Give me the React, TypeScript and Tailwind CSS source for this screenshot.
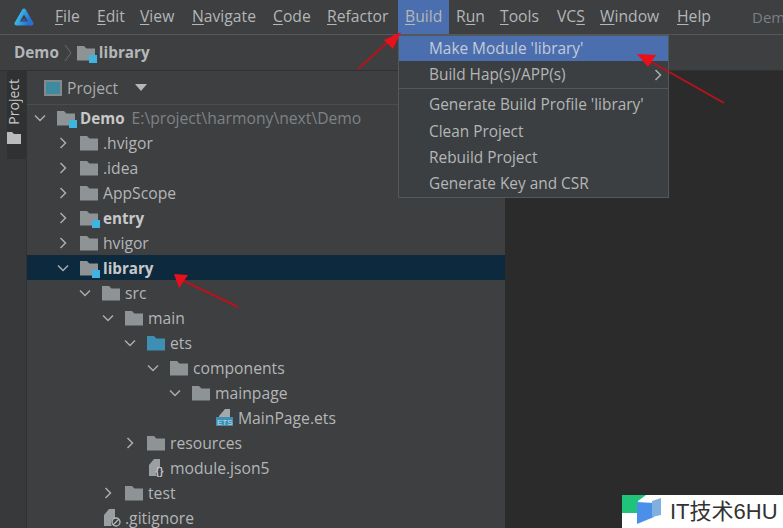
import React from "react";

const font = { fontFamily: '"Open Sans","Noto Sans",sans-serif' };

function Folder({ color = "#8e9396", badge = false }: { color?: string; badge?: boolean }) {
  return (
    <span className="relative inline-block w-[18px] h-[16px] shrink-0">
      <svg width="18" height="16" viewBox="0 0 18 16" className="block">
        <path d="M0 1h7l2.4 2.6H18V15.5H0z" fill={color} />
      </svg>
      {badge && <span className="absolute right-[-2px] bottom-[-2px] w-[8px] h-[8px] bg-[#3fb4e0]" />}
    </span>
  );
}

function Chevron({ open }: { open: boolean }) {
  return (
    <svg width="12" height="12" viewBox="0 0 12 12" className="shrink-0" fill="none" stroke="#a9adb0" strokeWidth="1.5">
      {open ? <path d="M1 3.5l5 5 5-5" /> : <path d="M3.5 1l5 5-5 5" />}
    </svg>
  );
}

function EtsIcon() {
  return (
    <svg width="18" height="19" viewBox="0 0 18 19" className="shrink-0">
      <path d="M3 8L9 1h5v8H3z" fill="#a3a8aa" />
      <rect x="0" y="9" width="17" height="9" fill="#3d8fb3" />
      <text x="1" y="17" fontSize="8" fill="#c9dde6" fontFamily="Liberation Sans">ETS</text>
    </svg>
  );
}

function FileIcon({ kind }: { kind: "json" | "ignore" }) {
  return (
    <svg width="18" height="19" viewBox="0 0 18 19" className="shrink-0">
      <path d="M1 7l5-6h6v9a5 5 0 0 0-3 8H1z" fill="#9a9fa2" />
      {kind === "json" ? (
        <text x="7.5" y="17" fontSize="10" fontWeight="700" fill="#c4c7c9" fontFamily="Liberation Sans">{"{}"}</text>
      ) : (
        <g fill="none" stroke="#b5b8ba" strokeWidth="1.3">
          <circle cx="13" cy="14" r="4" />
          <path d="M10 17l6-6" />
        </g>
      )}
    </svg>
  );
}

type Row = {
  label: string;
  left: number;
  open?: boolean;
  icon: "folder" | "module" | "src" | "ets" | "json" | "ignore";
  bold?: boolean;
  sel?: boolean;
  hint?: string;
};

const rows: Row[] = [
  { label: "Demo", left: 33, open: true, icon: "module", bold: true, hint: "E:\\project\\harmony\\next\\Demo" },
  { label: ".hvigor", left: 56, open: false, icon: "folder" },
  { label: ".idea", left: 56, open: false, icon: "folder" },
  { label: "AppScope", left: 56, open: false, icon: "folder" },
  { label: "entry", left: 56, open: false, icon: "module", bold: true },
  { label: "hvigor", left: 56, open: false, icon: "folder" },
  { label: "library", left: 56, open: true, icon: "module", bold: true, sel: true },
  { label: "src", left: 78, open: true, icon: "folder" },
  { label: "main", left: 101, open: true, icon: "folder" },
  { label: "ets", left: 123, open: true, icon: "src" },
  { label: "components", left: 146, open: true, icon: "folder" },
  { label: "mainpage", left: 168, open: true, icon: "folder" },
  { label: "MainPage.ets", left: 192, icon: "ets" },
  { label: "resources", left: 123, open: false, icon: "folder" },
  { label: "module.json5", left: 124, icon: "json" },
  { label: "test", left: 101, open: false, icon: "folder" },
  { label: ".gitignore", left: 79, icon: "ignore" },
];

function TreeRow({ r }: { r: Row }) {
  const icon =
    r.icon === "folder" ? <Folder /> :
    r.icon === "module" ? <Folder badge /> :
    r.icon === "src" ? <Folder color="#3d8fb3" /> :
    r.icon === "ets" ? <EtsIcon /> : <FileIcon kind={r.icon} />;
  const isFile = r.icon === "ets" || r.icon === "json" || r.icon === "ignore";
  return (
    <div className={`flex items-center h-[25px] shrink-0 ${r.sel ? "bg-[#0d293e]" : ""}`} style={{ paddingLeft: r.left - 26 }}>
      <span className="w-[23px] shrink-0 flex">{r.open !== undefined && <Chevron open={r.open} />}</span>
      {icon}
      <span className={`whitespace-nowrap pt-[2px] ${isFile ? "ml-[4px]" : "ml-[5px]"} ${r.bold ? "font-bold text-[15.2px] text-[#c8c8c8]" : ""}`}>{r.label}</span>
      {r.hint && <span className="ml-[7px] pt-[2px] text-[#7f8284] whitespace-nowrap">{r.hint}</span>}
    </div>
  );
}

function M({ a, u, b, w, active }: { a?: string; u: string; b: string; w: number; active?: boolean }) {
  return (
    <span className={`h-full flex items-center pl-[7px] shrink-0 ${active ? "bg-[#4b6eaf]" : ""}`} style={{ width: w }}>
      <span>{a}<span className="underline underline-offset-2">{u}</span>{b}</span>
    </span>
  );
}

export default function App() {
  return (
    <div className="relative w-[783px] h-[528px] overflow-hidden bg-[#3d3f41] text-[#b4b6b7] text-[15.7px] flex flex-col" style={font}>
      {/* menu bar */}
      <div className="flex items-stretch h-[35px] shrink-0 border-b border-[#55585a]">
        <svg width="22" height="22" viewBox="0 0 22 22" className="ml-[13px] mr-[13px] mt-[6px] shrink-0">
          <defs>
            <linearGradient id="lg" x1="0" y1="0" x2="1" y2="0.4">
              <stop offset="0" stopColor="#3fd0e8" />
              <stop offset="1" stopColor="#2a6fd6" />
            </linearGradient>
          </defs>
          <path d="M11 4.5L3.5 17.5h15z" fill="none" stroke="url(#lg)" strokeWidth="4" strokeLinejoin="round" />
          <path d="M11 12l-3 4h6z" fill="#2f5fa8" />
        </svg>
        <div className="flex items-center h-full">
          <M u="F" b="ile" w={42} />
          <M u="E" b="dit" w={43} />
          <M u="V" b="iew" w={52} />
          <M u="N" b="avigate" w={81} />
          <M u="C" b="ode" w={54} />
          <M u="R" b="efactor" w={78} />
          <M u="B" b="uild" w={51} active />
          <M a="R" u="u" b="n" w={44} />
          <M u="T" b="ools" w={57} />
          <M a="VC" u="S" b="" w={43} />
          <M u="W" b="indow" w={77} />
          <M u="H" b="elp" w={75} />
          <span className="pl-[7px] text-[15px] text-[#7c7f81] whitespace-nowrap">Dem</span>
        </div>
      </div>
      {/* breadcrumb */}
      <div className="flex items-center h-[36px] shrink-0 border-b border-[#2f3133] pl-[14px] font-bold text-[15.3px] text-[#b4b6b7]">
        <span>Demo</span>
        <svg width="8" height="18" viewBox="0 0 8 18" className="mx-[5px]" fill="none" stroke="#6a6d6f"><path d="M1 1l6 8-6 8" /></svg>
        <Folder badge />
        <span className="ml-[4px]">library</span>
      </div>
      {/* body */}
      <div className="flex flex-1 min-h-0">
        <div className="w-[27px] shrink-0 border-r border-[#2f3133] bg-[#38393b] pl-[7px]">
          <div className="h-[88px] w-[19px] bg-[#2f3133] flex flex-col items-start pt-[8px] gap-[7px]">
            <span className="[writing-mode:vertical-rl] rotate-180 text-[14px] text-[#c8c8c8] leading-none">Project</span>
            <svg width="14" height="12" viewBox="0 0 14 12"><path d="M0 0h5l2 2h7v10H0z" fill="#b9bbbd" /></svg>
          </div>
        </div>
        <div className="w-[478px] shrink-0 flex flex-col min-h-0">
          <div className="flex items-center h-[34px] shrink-0 border-b border-[#4a4d4f] pl-[17px] pr-[14px]">
            <span className="w-[18px] h-[16px] border-2 border-[#85898b] bg-[#3e8a9e] shrink-0" />
            <span className="ml-[5px] pt-[2px] text-[#a9abac]">Project</span>
            <svg width="12" height="7" viewBox="0 0 12 7" className="ml-[17px]"><path d="M0 0h12L6 7z" fill="#b4b6b7" /></svg>
            <span className="flex-1" />
            <svg width="18" height="18" viewBox="0 0 18 18" fill="none" stroke="#636668" strokeWidth="2">
              <circle cx="9" cy="9" r="8" />
              <path d="M9 3.5v3M9 11.5v3M3.5 9h3M11.5 9h3" />
            </svg>
            <svg width="16" height="18" viewBox="0 0 16 18" className="ml-[16px]" fill="#b4b6b7">
              <rect x="0" y="0" width="16" height="1.6" />
              <rect x="0" y="16.4" width="16" height="1.6" />
              <path d="M3 7l5-4 5 4zM3 11l5 4 5-4z" />
            </svg>
          </div>
          <div className="flex flex-col flex-1 min-h-0 overflow-hidden">
            {rows.map((r) => <TreeRow key={r.label} r={r} />)}
          </div>
        </div>
        <div className="flex-1 bg-[#2b2b2b]" />
      </div>

      {/* Build popup */}
      <div className="absolute left-[398px] top-[35px] w-[271px] h-[163px] bg-[#3c3f41] border border-[#55585a] flex flex-col text-[15.4px]">
        <div className="h-[25px] shrink-0 bg-[#4b6eaf] pl-[30px] flex items-center text-[#c4cbd8]">Make Module 'library'</div>
        <div className="h-[27px] shrink-0 pl-[30px] flex items-center justify-between pr-[4px]">
          <span>Build Hap(s)/APP(s)</span>
          <Chevron open={false} />
        </div>
        <div className="h-px shrink-0 bg-[#55585a] mb-[3px]" />
        <div className="h-[26px] shrink-0 pl-[30px] flex items-center">Generate Build Profile 'library'</div>
        <div className="h-[27px] shrink-0 pl-[30px] flex items-center">Clean Project</div>
        <div className="h-[26px] shrink-0 pl-[30px] flex items-center">Rebuild Project</div>
        <div className="h-[26px] shrink-0 pl-[30px] flex items-center">Generate Key and CSR</div>
      </div>

      {/* red arrows */}
      <svg className="absolute inset-0 pointer-events-none" width="783" height="528" viewBox="0 0 783 528">
        <g stroke="#b5141c" strokeWidth="2" fill="#e8101a">
          <path d="M358 69L392 38" />
          <path d="M401 32L384 40l9 9z" stroke="none" />
          <path d="M724 103L648 60" />
          <path d="M637 54l19 1-8 12z" stroke="none" />
          <path d="M238 307L182 280" />
          <path d="M174 274l14 1-9 13z" stroke="none" />
        </g>
      </svg>

      {/* watermark */}
      <div className="absolute left-[622px] top-[495px] w-[161px] h-[33px] bg-white flex items-center overflow-hidden">
        <svg width="42" height="33" viewBox="0 0 42 33" className="shrink-0">
          <path d="M0 0h24l-8 6v12H0z" fill="#1fc37a" />
          <path d="M15 7l17 1V22L15 29z" fill="#4a90ea" />
          <path d="M30 6l9-3v17l-9 2z" fill="#7fb0e0" />
        </svg>
        <span className="ml-[6px] text-[22px] text-[#333] whitespace-nowrap" style={{ fontFamily: '"Liberation Sans","Noto Sans CJK SC",sans-serif' }}>IT技术6HU</span>
      </div>
    </div>
  );
}
